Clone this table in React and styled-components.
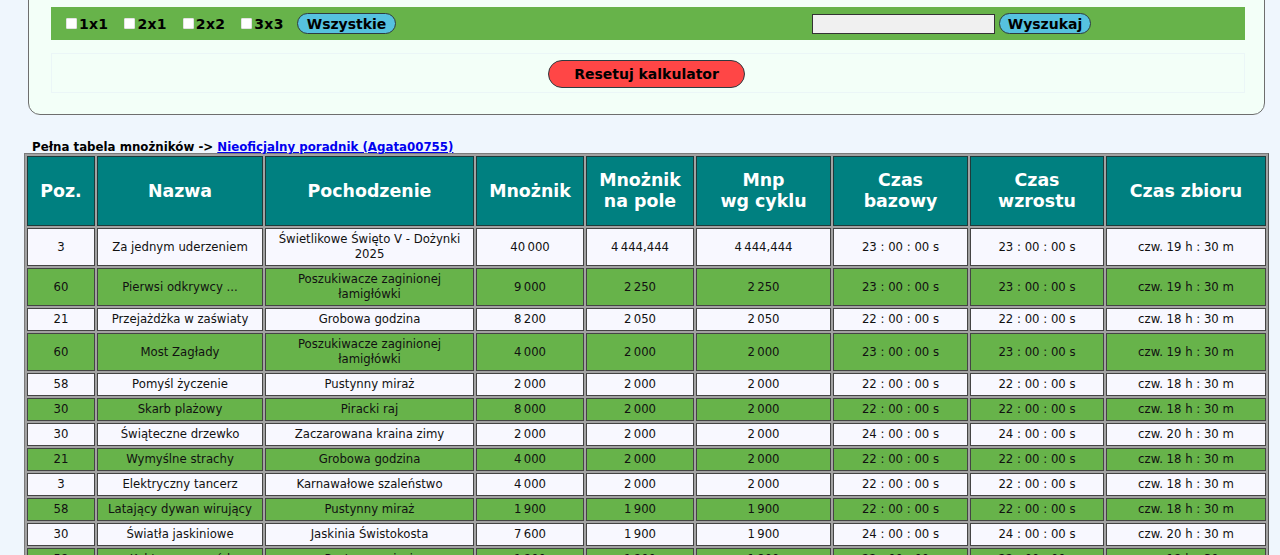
import React from "react";
import styled, { createGlobalStyle } from "styled-components";

const Global = createGlobalStyle`
  html, body { margin: 0; padding: 0; background: #eff6fd; }
  body { font-family: "DejaVu Sans", Verdana, sans-serif; color: #000; overflow: hidden; }
`;

const Page = styled.div`
  width: 1280px;
  height: 555px;
  overflow: hidden;
`;

const Panel = styled.section`
  margin: -20px 0 0 28px;
  width: 1237px;
  box-sizing: border-box;
  padding: 26px 19px 21px 22px;
  background: #f3fff8;
  border: 1px solid #6e6e6e;
  border-radius: 12px;
`;

const FilterBar = styled.div`
  display: grid;
  grid-template-columns: 1fr 1fr;
  align-items: center;
  height: 33px;
  background: #67b34a;
`;

const FilterGroup = styled.div`
  display: flex;
  align-items: center;
  padding-left: 15px;
`;

const SearchGroup = styled.div`
  display: flex;
  align-items: center;
  justify-content: center;
  gap: 4px;
  padding-left: 10px;
`;

const Option = styled.label`
  display: flex;
  align-items: center;
  gap: 2px;
  margin-right: 16px;
  font-weight: bold;
  font-size: 14px;
  letter-spacing: 0.3px;
  &:last-of-type { margin-right: 13px; }
`;

const Box = styled.input.attrs({ type: "checkbox" })`
  appearance: none;
  margin: 0;
  width: 11px;
  height: 11px;
  background: #fff;
  border: 1px solid #e2e2e2;
  border-radius: 1px;
`;

const Pill = styled.button`
  height: ${(p) => p.$h || 21}px;
  padding: 0 ${(p) => p.$px || 9}px;
  border: 1px solid #2e3b40;
  border-radius: 999px;
  background: ${(p) => p.$bg || "#56c2df"};
  font-family: "DejaVu Sans", Verdana, sans-serif;
  font-weight: bold;
  font-size: 14px;
  color: #000;
  line-height: 1;
  cursor: pointer;
`;

const SearchInput = styled.input`
  width: 183px;
  height: 20px;
  box-sizing: border-box;
  border: 1px solid #333;
  background: #f0f0f0;
  margin: 0;
`;

const ResetBox = styled.div`
  margin-top: 13px;
  height: 40px;
  box-sizing: border-box;
  border: 1px solid #ebf6f7;
  display: flex;
  align-items: center;
  justify-content: center;
  padding: 1px 3px 0 0;
`;

const Caption = styled.p`
  margin: 23px 0 0 32px;
  font-weight: bold;
  font-size: 11.8px;
  line-height: 19px;
  height: 15px;
`;

const GuideLink = styled.a`
  color: #0000ee;
  text-decoration: underline;
`;

const Table = styled.table`
  margin-left: 24px;
  width: 1245px;
  table-layout: fixed;
  border-collapse: separate;
  border-spacing: 2px;
  border: 1px solid #7a7a7a;
  border-right-color: #555;
  border-bottom-color: #555;
  background: #a2a2a2;
`;

const Head = styled.th`
  box-sizing: border-box;
  width: ${(p) => p.$w}px;
  height: 70px;
  padding: 0 4px;
  background: #008080;
  color: #fff;
  font-size: 17.4px;
  line-height: 21px;
  font-weight: bold;
  text-align: center;
  border: 1px solid #1f3a3a;
`;

const Row = styled.tr`
  background: ${(p) => (p.$green ? "#67b34a" : "#f8f8ff")};
`;

const Cell = styled.td`
  box-sizing: border-box;
  padding: 3px 3px;
  font-size: 11.7px;
  line-height: 15px;
  text-align: center;
  border: 1px solid #444;
  color: #111;
`;

const cols = [
  ["Poz.", 68],
  ["Nazwa", 166],
  ["Pochodzenie", 209],
  ["Mnożnik", 108],
  ["Mnożnik\nna pole", 108],
  ["Mnp\nwg cyklu", 135],
  ["Czas\nbazowy", 135],
  ["Czas\nwzrostu", 134],
  ["Czas zbioru", 160],
];

const n = (s) => s.replace(/ /g, "\u202F");
const t = (h) => `${h} : 00 : 00 s`;
const z = (h) => `czw. ${h} h : 30 m`;

const rows = [
  ["3", "Za jednym uderzeniem", "Świetlikowe Święto V - Dożynki 2025", "40 000", "4 444,444", "4 444,444", 23, 19],
  ["60", "Pierwsi odkrywcy ...", "Poszukiwacze zaginionej łamigłówki", "9 000", "2 250", "2 250", 23, 19],
  ["21", "Przejażdżka w zaświaty", "Grobowa godzina", "8 200", "2 050", "2 050", 22, 18],
  ["60", "Most Zagłady", "Poszukiwacze zaginionej łamigłówki", "4 000", "2 000", "2 000", 23, 19],
  ["58", "Pomyśl życzenie", "Pustynny miraż", "2 000", "2 000", "2 000", 22, 18],
  ["30", "Skarb plażowy", "Piracki raj", "8 000", "2 000", "2 000", 22, 18],
  ["30", "Świąteczne drzewko", "Zaczarowana kraina zimy", "2 000", "2 000", "2 000", 24, 20],
  ["21", "Wymyślne strachy", "Grobowa godzina", "4 000", "2 000", "2 000", 22, 18],
  ["3", "Elektryczny tancerz", "Karnawałowe szaleństwo", "4 000", "2 000", "2 000", 22, 18],
  ["58", "Latający dywan wirujący", "Pustynny miraż", "1 900", "1 900", "1 900", 22, 18],
  ["30", "Światła jaskiniowe", "Jaskinia Świstokosta", "7 600", "1 900", "1 900", 24, 20],
  ["58", "Kaktusowy ogród", "Pustynny miraż", "1 800", "1 800", "1 800", 22, 18],
];

export default function App() {
  return (
    <Page>
      <Global />
      <Panel>
        <FilterBar>
          <FilterGroup>
            {["1x1", "2x1", "2x2", "3x3"].map((s) => (
              <Option key={s}>
                <Box />
                {s}
              </Option>
            ))}
            <Pill>Wszystkie</Pill>
          </FilterGroup>
          <SearchGroup>
            <SearchInput type="text" />
            <Pill $h={21} $px={8}>Wyszukaj</Pill>
          </SearchGroup>
        </FilterBar>
        <ResetBox>
          <Pill $bg="#ff4646" $h={28} $px={25}>Resetuj kalkulator</Pill>
        </ResetBox>
      </Panel>
      <Caption>
        Pełna tabela mnożników -&gt; <GuideLink href="#">Nieoficjalny poradnik (Agata00755)</GuideLink>
      </Caption>
      <Table>
        <thead>
          <tr>
            {cols.map(([label, w]) => (
              <Head key={label} $w={w}>
                {label.split("\n").map((l, i) => (
                  <React.Fragment key={i}>
                    {i > 0 && <br />}
                    {l}
                  </React.Fragment>
                ))}
              </Head>
            ))}
          </tr>
        </thead>
        <tbody>
          {rows.map((r, i) => (
            <Row key={i} $green={i % 2 === 1}>
              <Cell>{r[0]}</Cell>
              <Cell>{r[1]}</Cell>
              <Cell>{r[2]}</Cell>
              <Cell>{n(r[3])}</Cell>
              <Cell>{n(r[4])}</Cell>
              <Cell>{n(r[5])}</Cell>
              <Cell>{t(r[6])}</Cell>
              <Cell>{t(r[6])}</Cell>
              <Cell>{z(r[7])}</Cell>
            </Row>
          ))}
        </tbody>
      </Table>
    </Page>
  );
}
